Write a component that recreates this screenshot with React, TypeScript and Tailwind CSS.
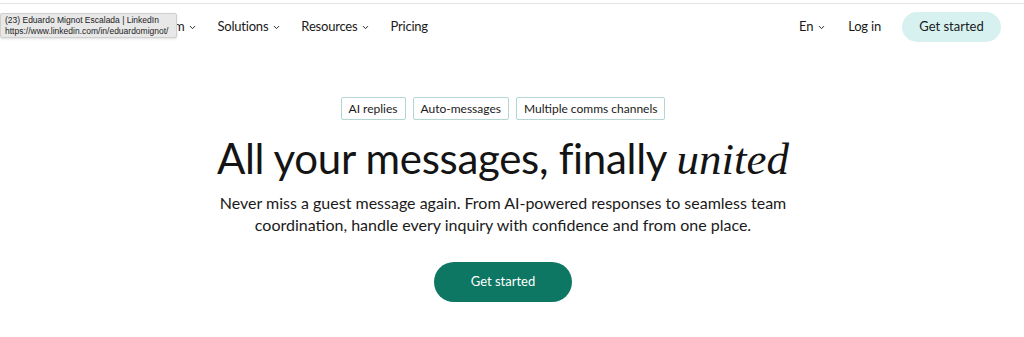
import { ChevronDown } from "lucide-react";

const sans = "font-['Lato','Liberation_Sans',sans-serif]";

function NavItem({ label, caret }: { label: string; caret?: boolean }) {
  return (
    <a className="flex items-center gap-[4px] text-[13px] tracking-[-0.2px] text-[#1a1a1a]">
      <span>{label}</span>
      {caret && <ChevronDown className="w-[9px] h-[9px] mt-[1px]" strokeWidth={2.5} />}
    </a>
  );
}

export default function App() {
  const tags = ["AI replies", "Auto-messages", "Multiple comms channels"];

  return (
    <div className={`relative w-[1024px] h-[337px] bg-white overflow-hidden ${sans}`}>
      <div className="h-[3px]" />
      <div className="h-px bg-[#e2e2e2]" />

      {/* Header */}
      <header className="flex items-center justify-between h-[46px] pl-[137px] pr-[23px]">
        <nav className="flex items-center gap-[20px]">
          <NavItem label="Platform" caret />
          <NavItem label="Solutions" caret />
          <NavItem label="Resources" caret />
          <NavItem label="Pricing" />
        </nav>
        <div className="flex items-center">
          <NavItem label="En" caret />
          <a className="ml-[22px] text-[13px] tracking-[-0.2px] text-[#1a1a1a]">Log in</a>
          <button className="ml-[21px] h-[30px] w-[99px] rounded-full bg-[#d7f1f1] text-[13px] text-[#1a1a1a]">
            Get started
          </button>
        </div>
      </header>

      {/* Hero */}
      <section className="flex flex-col items-center pt-[47px] pr-[18px]">
        <div className="flex gap-[7px]">
          {tags.map((t) => (
            <span
              key={t}
              className="h-[23px] px-[7px] flex items-center border border-[#b3d6d2] rounded-[2px] text-[12px] text-[#1a1a1a]"
            >
              {t}
            </span>
          ))}
        </div>
        <h1 className="mt-[14px] text-[42px] leading-[48px] tracking-[-0.3px] text-[#141414]">
          All your messages, finally{" "}
          <span className="font-['Liberation_Serif',serif] italic text-[45px] tracking-normal">united</span>
        </h1>
        <p className="mt-[9px] whitespace-nowrap text-center text-[16px] leading-[22px] text-[#1a1a1a]">
          Never miss a guest message again. From AI-powered responses to seamless team
          <br />
          coordination, handle every inquiry with confidence and from one place.
        </p>
        <button className="mt-[26px] h-[40px] w-[138px] rounded-full bg-[#0e7763] text-white text-[13px]">
          Get started
        </button>
      </section>

      {/* Browser link tooltip */}
      <div className="absolute left-0 top-[13px] w-[177px] h-[25px] bg-[#e8e8e8] border border-[#cfcfcf] rounded-[2px] px-[4px] pt-[1px] leading-[11px] text-[#222] font-['Liberation_Sans',sans-serif] shadow-sm whitespace-nowrap overflow-hidden">
        <div className="text-[8.5px]">(23) Eduardo Mignot Escalada | LinkedIn</div>
        <div className="text-[8.5px]">https://www.linkedin.com/in/eduardomignot/</div>
      </div>
    </div>
  );
}
